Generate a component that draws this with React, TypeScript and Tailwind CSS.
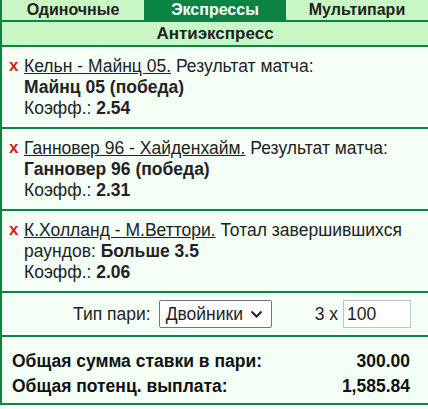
import React from "react";

type Bet = {
  id: number;
  match: string;
  market: string;
  pick: string;
  pickInline?: boolean;
  odds: string;
};

const bets: Bet[] = [
  { id: 1, match: "Кельн - Майнц 05.", market: "Результат матча:", pick: "Майнц 05 (победа)", odds: "2.54" },
  { id: 2, match: "Ганновер 96 - Хайденхайм.", market: "Результат матча:", pick: "Ганновер 96 (победа)", odds: "2.31" },
  { id: 3, match: "К.Холланд - М.Веттори.", market: "Тотал завершившихся раундов:", pick: "Больше 3.5", pickInline: true, odds: "2.06" },
];

function Tab({ label, active }: { label: string; active?: boolean }) {
  return (
    <div
      className={`flex-1 h-5 flex items-center justify-center text-[16px] font-bold leading-5 ${
        active ? "bg-[#0b8443] text-white" : "bg-[#c8f7c5] text-[#222]"
      }`}
    >
      {label}
    </div>
  );
}

function BetRow({ bet }: { bet: Bet }) {
  return (
    <div className="flex pl-[7px] pr-3 pt-[9px] pb-2 border-b-2 border-[#0b8443] text-[17.5px] leading-[21px] text-[#222]">
      <span className="w-[15px] shrink-0 text-[#d01f1f] font-bold text-[17px] leading-[19px]">x</span>
      <div>
        <div>
          <span className="underline">{bet.match}</span> {bet.market}
          {bet.pickInline ? (
            <>
              {" "}
              <b>{bet.pick}</b>
            </>
          ) : null}
        </div>
        {!bet.pickInline && <div className="font-bold">{bet.pick}</div>}
        <div>
          Коэфф.: <b>{bet.odds}</b>
        </div>
      </div>
    </div>
  );
}

export default function App() {
  return (
    <div className="w-[428px] h-[409px] bg-white font-['Liberation_Sans',Arial,sans-serif]">
      <div className="border-l-2 border-b-2 border-[#0b8443] bg-[#f4fff6]">
        <div className="flex border-b-2 border-[#0b8443]">
          <Tab label="Одиночные" />
          <Tab label="Экспрессы" active />
          <Tab label="Мультипари" />
        </div>
        <div className="h-[25px] flex items-center justify-center bg-[#c8f7c5] border-b-2 border-[#0b8443] text-[17px] font-bold text-[#222]">
          Антиэкспресс
        </div>

        {bets.map((b) => (
          <BetRow key={b.id} bet={b} />
        ))}

        <div className="h-[44px] flex items-center justify-end pr-[17px] border-b-2 border-[#0b8443] text-[17.5px] text-[#222]">
          <span className="mr-[8px]">Тип пари:</span>
          <div className="w-[113px] h-[28px] border border-[#767676] rounded-[2px] bg-white flex items-center justify-between pl-[6px] pr-[8px]">
            <span>Двойники</span>
            <svg width="13" height="9" viewBox="0 0 13 9" fill="none">
              <path d="M1.5 1.5 L6.5 6.5 L11.5 1.5" stroke="#222" strokeWidth="2" />
            </svg>
          </div>
          <span className="ml-[43px] mr-[5px]">3 x</span>
          <div className="w-[68px] h-[28px] border border-[#b5c9cc] bg-white flex items-center pl-[3px]">
            100
          </div>
        </div>

        <div className="pl-[10px] pr-[18px] pt-[12px] pb-[4px] text-[17.5px] leading-[25px] font-bold text-[#111]">
          <div className="flex justify-between">
            <span>Общая сумма ставки в пари:</span>
            <span>300.00</span>
          </div>
          <div className="flex justify-between">
            <span>Общая потенц. выплата:</span>
            <span>1,585.84</span>
          </div>
        </div>
      </div>
    </div>
  );
}
